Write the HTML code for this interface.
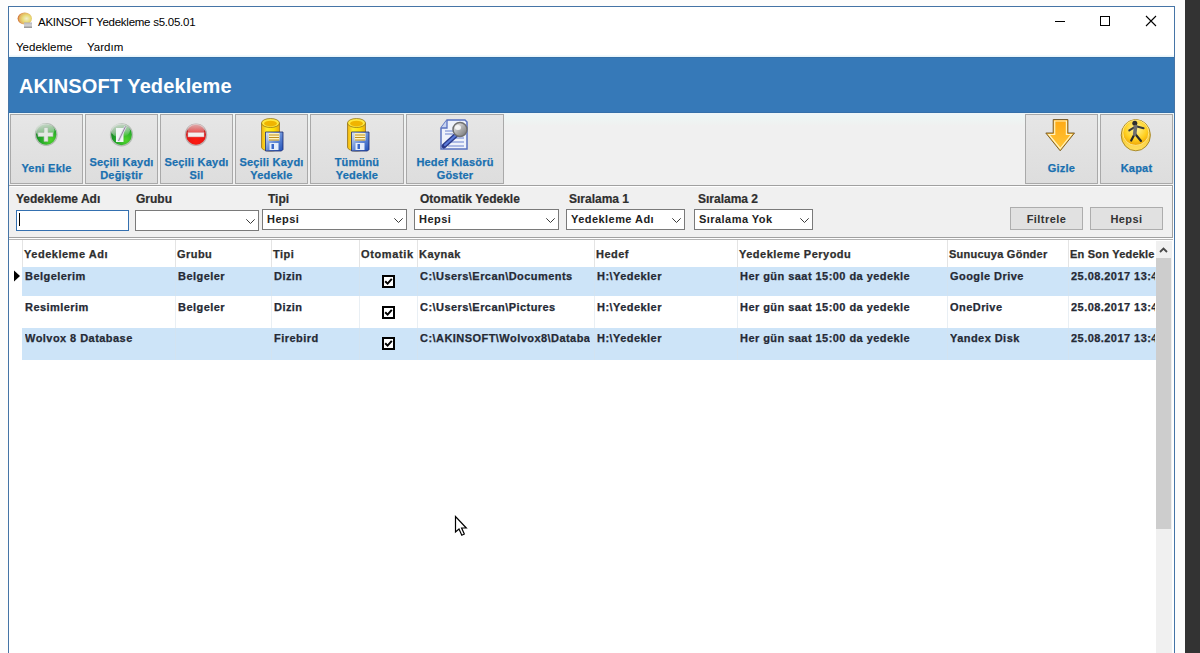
<!DOCTYPE html>
<html><head><meta charset="utf-8">
<style>
*{margin:0;padding:0;box-sizing:border-box}
html,body{width:1200px;height:653px;overflow:hidden;background:#fdfdfd;font-family:"Liberation Sans",sans-serif}
.a{position:absolute}
.t{position:absolute;white-space:nowrap;line-height:1}
#desk{left:1185px;top:0;width:15px;height:653px;background:#333333}
#win{left:8px;top:6px;width:1167px;height:660px;border:1px solid #4574a6;background:#ffffff}
.hdr{left:9px;top:57px;width:1165px;height:56px;background:#3679b8;border-top:1px solid #3570a8;border-bottom:1px solid #3470aa}
.tb{left:9px;top:113px;width:1165px;height:72px;background:linear-gradient(#eef6f8 0px,#eef5f3 6px,#f0f0f0 13px,#f0f0f0)}
.btn{position:absolute;top:114px;height:70px;border:1px solid #a9a9a9;background:linear-gradient(#e6e6e6,#dddddd)}
.bt{position:absolute;left:0;width:100%;text-align:center;font-weight:bold;font-size:11px;color:#1a70b0;line-height:12.8px;letter-spacing:.2px;-webkit-text-stroke:.25px #1a70b0}
.fp{left:9px;top:185px;width:1164px;height:53px;background:#f0f0f0;border-top:1px solid #a0a0a0;border-bottom:1px solid #a0a0a0;border-right:1px solid #a0a0a0}
.lbl{position:absolute;top:193px;font-size:12px;font-weight:bold;color:#2e2e2e;line-height:1;-webkit-text-stroke:.2px #2e2e2e}
.cb{position:absolute;top:210px;height:21px;border:1px solid #7a7a7a;background:#fff}
.cbt{position:absolute;left:4px;top:4px;font-size:11px;letter-spacing:.45px;line-height:11px;font-weight:bold;color:#222;white-space:nowrap}
.chev{position:absolute;right:3px;top:8px;width:9px;height:5px}
.fbtn{position:absolute;top:207px;height:23px;border:1px solid #adadad;background:#e1e1e1;text-align:center;font-size:11px;letter-spacing:.45px;font-weight:bold;color:#333;line-height:23px}
.grid{left:9px;top:238px;width:1164px;height:420px;background:#ffffff}
.gh{position:absolute;top:249px;font-size:11px;letter-spacing:.45px;font-weight:bold;color:#2e2e2e;line-height:1;-webkit-text-stroke:.25px #2e2e2e}
.sep{position:absolute;top:240px;width:1px;height:27px;background:#e4e4e4}
.row{position:absolute;left:22px;width:1134px;height:31px}
.cell{position:absolute;font-size:11px;letter-spacing:.45px;font-weight:bold;color:#252a35;line-height:1;white-space:nowrap;overflow:hidden;-webkit-text-stroke:.25px #252a35}
.vsep{position:absolute;width:1px;background:rgba(215,225,235,.55)}
.chk{position:absolute;left:382px;width:13px;height:13px;border:2px solid #000;background:#fff}
</style></head><body>
<div id="desk" class="a"></div>
<div id="win" class="a"></div>

<!-- title bar -->
<svg class="a" style="left:16px;top:11px" width="18" height="18" viewBox="0 0 18 18">
<defs><radialGradient id="gb" cx="0.62" cy="0.5" r="0.62"><stop offset="0" stop-color="#f0eed0"/><stop offset="0.45" stop-color="#e8dc78"/><stop offset="0.8" stop-color="#e2b060"/><stop offset="1" stop-color="#cc6428"/></radialGradient>
<linearGradient id="gbase" x1="0" y1="0" x2="0" y2="1"><stop offset="0" stop-color="#b0b0b8"/><stop offset="0.5" stop-color="#d4d4d4"/><stop offset="1" stop-color="#909090"/></linearGradient></defs>
<ellipse cx="8.8" cy="7.6" rx="7.2" ry="6" fill="url(#gb)"/>
<path d="M8 11.5h8v5.5h-8z" fill="url(#gbase)"/>

</svg>
<div class="t" style="left:38px;top:17px;font-size:11.5px;letter-spacing:-.25px;color:#000">AKINSOFT Yedekleme s5.05.01</div>
<!-- window controls -->
<div class="a" style="left:1055px;top:21px;width:10px;height:1px;background:#000"></div>
<div class="a" style="left:1100px;top:16px;width:10px;height:10px;border:1px solid #000"></div>
<svg class="a" style="left:1145px;top:15px" width="12" height="12" viewBox="0 0 12 12"><path d="M1 1L11 11M11 1L1 11" stroke="#000" stroke-width="1.1"/></svg>
<!-- menu -->
<div class="t" style="left:16px;top:42px;font-size:11.5px;color:#000">Yedekleme</div>
<div class="t" style="left:87px;top:42px;font-size:11.5px;color:#000">Yardım</div>

<!-- header -->
<div class="a" style="left:9px;top:55px;width:1165px;height:2px;background:linear-gradient(#f6fbfd,#e4f4fb)"></div>
<div class="a hdr"></div>
<div class="t" style="left:19px;top:75.5px;font-size:20px;letter-spacing:.1px;font-weight:bold;color:#fff">AKINSOFT Yedekleme</div>

<!-- toolbar -->
<div class="a tb"></div>
<div class="btn" style="left:10px;width:73px"><div class="bt" style="top:47px">Yeni Ekle</div></div>
<div class="btn" style="left:85px;width:73px"><div class="bt" style="top:41px">Seçili Kaydı<br>Değiştir</div></div>
<div class="btn" style="left:160px;width:73px"><div class="bt" style="top:41px">Seçili Kaydı<br>Sil</div></div>
<div class="btn" style="left:235px;width:73px"><div class="bt" style="top:41px">Seçili Kaydı<br>Yedekle</div></div>
<div class="btn" style="left:310px;width:94px"><div class="bt" style="top:41px">Tümünü<br>Yedekle</div></div>
<div class="btn" style="left:406px;width:98px"><div class="bt" style="top:41px">Hedef Klasörü<br>Göster</div></div>
<div class="btn" style="left:1025px;width:73px"><div class="bt" style="top:47px">Gizle</div></div>
<div class="btn" style="left:1100px;width:73px"><div class="bt" style="top:47px">Kapat</div></div>


<!-- toolbar icons -->
<svg class="a" style="left:34px;top:122px" width="25" height="25" viewBox="0 0 25 25">
<defs>
<radialGradient id="g1" cx="0.7" cy="0.75" r="0.8"><stop offset="0" stop-color="#4fd42a"/><stop offset="0.6" stop-color="#22a52a"/><stop offset="1" stop-color="#137a1e"/></radialGradient>
<linearGradient id="gl" x1="0.2" y1="0" x2="0.5" y2="1"><stop offset="0" stop-color="#e0e4e0" stop-opacity="0.95"/><stop offset="0.55" stop-color="#c8d8c8" stop-opacity="0.7"/><stop offset="1" stop-color="#ffffff" stop-opacity="0"/></linearGradient>
</defs>
<circle cx="12.2" cy="12.5" r="10.8" fill="url(#g1)" stroke="#b4bcb4" stroke-width="1.3"/>
<ellipse cx="11" cy="8.5" rx="9.5" ry="7" fill="url(#gl)"/>
<path d="M10 5.5h4v5h5v4h-5v5h-4v-5h-6v-4h6z" fill="#e4eae4" stroke="#a8b8a8" stroke-width="0.6"/>
</svg>
<svg class="a" style="left:109px;top:122px" width="25" height="25" viewBox="0 0 25 25">
<defs>
<radialGradient id="g2" cx="0.7" cy="0.75" r="0.8"><stop offset="0" stop-color="#4fd42a"/><stop offset="0.6" stop-color="#22a52a"/><stop offset="1" stop-color="#137a1e"/></radialGradient>
</defs>
<circle cx="12.5" cy="12.8" r="11" fill="url(#g2)" stroke="#b4bcb4" stroke-width="1.3"/>
<ellipse cx="11.5" cy="8.5" rx="9.5" ry="7" fill="url(#gl)"/>
<path d="M7 6h7.5v14h-7.5z" fill="#f2f6f6"/>
<path d="M16.5 4.5L9.5 19" stroke="#e0dce8" stroke-width="2.6"/>
<path d="M16.5 4.5L9.5 19" stroke="#8a7a9a" stroke-width="0.9"/>
</svg>
<svg class="a" style="left:184px;top:122px" width="25" height="25" viewBox="0 0 25 25">
<defs>
<radialGradient id="g3" cx="0.5" cy="0.8" r="0.75"><stop offset="0" stop-color="#ff1a10"/><stop offset="0.65" stop-color="#e01515"/><stop offset="1" stop-color="#b01818"/></radialGradient>
<linearGradient id="gl3" x1="0" y1="0" x2="0" y2="1"><stop offset="0" stop-color="#f0d0d0" stop-opacity="0.8"/><stop offset="1" stop-color="#ffffff" stop-opacity="0.05"/></linearGradient>
</defs>
<circle cx="12" cy="12.7" r="10.6" fill="url(#g3)" stroke="#bcb0b0" stroke-width="1.3"/>
<ellipse cx="12" cy="8" rx="8.5" ry="6" fill="url(#gl3)"/>
<rect x="4" y="10.7" width="16" height="4.2" fill="#f4eeee" stroke="#d8b8b8" stroke-width="0.5"/>
</svg>
<svg class="a" style="left:261px;top:118px" width="24" height="34" viewBox="0 0 24 34">
<defs>
<linearGradient id="cy1" x1="0" y1="0" x2="1" y2="0"><stop offset="0" stop-color="#f0b010"/><stop offset="0.3" stop-color="#fff030"/><stop offset="0.7" stop-color="#ffe000"/><stop offset="1" stop-color="#e8a810"/></linearGradient>
<linearGradient id="fl1" x1="0" y1="0" x2="1" y2="1"><stop offset="0" stop-color="#e0e8f4"/><stop offset="0.5" stop-color="#6a90d8"/><stop offset="1" stop-color="#2050b8"/></linearGradient>
</defs>
<path d="M0.5 5v24c0 2.5 4 4 9 4s9-1.5 9-4V5z" fill="url(#cy1)" stroke="#8a6a10" stroke-width="0.7"/>
<ellipse cx="9.5" cy="5" rx="9" ry="4.5" fill="#ffe840" stroke="#8a6a10" stroke-width="0.7"/>
<ellipse cx="9.5" cy="5.6" rx="6.5" ry="2.8" fill="#f0b400"/>
<path d="M4.5 14h17.5v17.5l-1.5 1.5h-16z" fill="url(#fl1)" stroke="#1a2a70" stroke-width="0.8"/>
<rect x="7.5" y="15" width="11" height="7.5" fill="#fff4c0"/>
<path d="M8 17h10M8 19.5h10M8 22h10" stroke="#c09020" stroke-width="1"/>
<rect x="8.5" y="25" width="9" height="7" fill="#e6eefa"/>
<rect x="10.5" y="26" width="2.5" height="5" fill="#3a68c8"/>
</svg>
<svg class="a" style="left:347px;top:118px" width="24" height="34" viewBox="0 0 24 34">
<defs>
<linearGradient id="cy2" x1="0" y1="0" x2="1" y2="0"><stop offset="0" stop-color="#f0b010"/><stop offset="0.3" stop-color="#fff030"/><stop offset="0.7" stop-color="#ffe000"/><stop offset="1" stop-color="#e8a810"/></linearGradient>
<linearGradient id="fl2" x1="0" y1="0" x2="1" y2="1"><stop offset="0" stop-color="#e0e8f4"/><stop offset="0.5" stop-color="#6a90d8"/><stop offset="1" stop-color="#2050b8"/></linearGradient>
</defs>
<path d="M0.5 5v24c0 2.5 4 4 9 4s9-1.5 9-4V5z" fill="url(#cy2)" stroke="#8a6a10" stroke-width="0.7"/>
<ellipse cx="9.5" cy="5" rx="9" ry="4.5" fill="#ffe840" stroke="#8a6a10" stroke-width="0.7"/>
<ellipse cx="9.5" cy="5.6" rx="6.5" ry="2.8" fill="#f0b400"/>
<path d="M4.5 14h17.5v17.5l-1.5 1.5h-16z" fill="url(#fl2)" stroke="#1a2a70" stroke-width="0.8"/>
<rect x="7.5" y="15" width="11" height="7.5" fill="#fff4c0"/>
<path d="M8 17h10M8 19.5h10M8 22h10" stroke="#c09020" stroke-width="1"/>
<rect x="8.5" y="25" width="9" height="7" fill="#e6eefa"/>
<rect x="10.5" y="26" width="2.5" height="5" fill="#3a68c8"/>
</svg>
<svg class="a" style="left:439px;top:118px" width="32" height="34" viewBox="0 0 32 34">
<defs><linearGradient id="lens" x1="0" y1="0" x2="1" y2="1"><stop offset="0" stop-color="#f8f8f8"/><stop offset="0.5" stop-color="#b0b0b0"/><stop offset="1" stop-color="#707070"/></linearGradient></defs>
<path d="M8 2h18l2 2v27h-26v-21z" fill="#eef2fb" stroke="#5a72c0" stroke-width="1.5"/>
<path d="M2 10h6v-8" fill="#c8d4f0" stroke="#5a72c0" stroke-width="1.3"/>
<path d="M6 13h10M6 16h8M11 20h14M10 24h15M9 28h16" stroke="#6a82d0" stroke-width="1.2"/>
<path d="M17 17L5 28" stroke="#2a3a8a" stroke-width="5" stroke-linecap="round"/>
<path d="M16.5 17.5L6 27" stroke="#5a7ad8" stroke-width="2.2" stroke-linecap="round"/>
<circle cx="21" cy="11.5" r="7" fill="url(#lens)" stroke="#707070" stroke-width="1.5"/>
<ellipse cx="19" cy="9.5" rx="3" ry="2.5" fill="#ffffff" opacity="0.8"/>
</svg>
<svg class="a" style="left:1045px;top:118px" width="30" height="34" viewBox="0 0 30 34">
<defs><linearGradient id="arr" x1="0" y1="0" x2="0" y2="1"><stop offset="0" stop-color="#ffa812"/><stop offset="1" stop-color="#ffc83a"/></linearGradient></defs>
<path d="M8.2 1.5h14.7v13.5h6.6L15.2 32.8L0.8 15h7.4z" fill="url(#arr)" stroke="#7a6030" stroke-width="1"/>
<path d="M9.7 3h11.7v13.5h5L15.2 30.5L3.8 16.5h5.9z" fill="none" stroke="#fff3c0" stroke-width="1.2"/>
</svg>
<svg class="a" style="left:1120px;top:118px" width="32" height="34" viewBox="0 0 32 34">
<defs>
<radialGradient id="coin" cx="0.5" cy="0.35" r="0.7"><stop offset="0" stop-color="#fff6a0"/><stop offset="0.6" stop-color="#ffd020"/><stop offset="1" stop-color="#e89a00"/></radialGradient>
<linearGradient id="rim" x1="0" y1="0" x2="0" y2="1"><stop offset="0" stop-color="#f0b000"/><stop offset="1" stop-color="#ffe060"/></linearGradient>
</defs>
<ellipse cx="15.8" cy="17.2" rx="14.6" ry="15.6" fill="url(#rim)" stroke="#a08020" stroke-width="0.9"/>
<ellipse cx="15.8" cy="14.8" rx="13" ry="12.6" fill="url(#coin)" stroke="#fff0a0" stroke-width="0.8"/>
<circle cx="14.8" cy="5.2" r="2.5" fill="#2e2e2e"/>
<path d="M16 8.3L23.6 10.3M14.6 9.2L9.3 12.4" stroke="#3a3a3a" stroke-width="2" fill="none" stroke-linecap="round"/>
<path d="M14.6 16L11.2 22.6M15.2 16L21 23" stroke="#2a2a2a" stroke-width="2.2" fill="none" stroke-linecap="round"/>
<path d="M15.6 8.5L14.7 16.2" stroke="#6e6e6e" stroke-width="3.6" stroke-linecap="round"/>
</svg>

<!-- filter panel -->
<div class="a fp"></div>
<div class="lbl" style="left:16px">Yedekleme Adı</div>
<div class="lbl" style="left:136px">Grubu</div>
<div class="lbl" style="left:268px">Tipi</div>
<div class="lbl" style="left:420px">Otomatik Yedekle</div>
<div class="lbl" style="left:569px">Sıralama 1</div>
<div class="lbl" style="left:698px">Sıralama 2</div>
<div class="cb" style="left:16px;width:113px;border-color:#3470b0"><div class="a" style="left:2px;top:2px;width:1px;height:13px;background:#000"></div></div>
<div class="cb" style="left:135px;width:124px"><svg class="chev" viewBox="0 0 9 5"><path d="M0.3 0.3L4.5 4.5L8.7 0.3" stroke="#3a3a3a" stroke-width="1" fill="none"/></svg></div>
<div class="cb" style="top:209px;left:262px;width:145px"><svg class="chev" viewBox="0 0 9 5"><path d="M0.3 0.3L4.5 4.5L8.7 0.3" stroke="#3a3a3a" stroke-width="1" fill="none"/></svg><div class="cbt">Hepsi</div></div>
<div class="cb" style="top:209px;left:414px;width:145px"><svg class="chev" viewBox="0 0 9 5"><path d="M0.3 0.3L4.5 4.5L8.7 0.3" stroke="#3a3a3a" stroke-width="1" fill="none"/></svg><div class="cbt">Hepsi</div></div>
<div class="cb" style="top:209px;left:566px;width:119px"><svg class="chev" viewBox="0 0 9 5"><path d="M0.3 0.3L4.5 4.5L8.7 0.3" stroke="#3a3a3a" stroke-width="1" fill="none"/></svg><div class="cbt">Yedekleme Adı</div></div>
<div class="cb" style="top:209px;left:694px;width:119px"><svg class="chev" viewBox="0 0 9 5"><path d="M0.3 0.3L4.5 4.5L8.7 0.3" stroke="#3a3a3a" stroke-width="1" fill="none"/></svg><div class="cbt">Sıralama Yok</div></div>
<div class="fbtn" style="left:1010px;width:73px">Filtrele</div>
<div class="fbtn" style="left:1090px;width:73px">Hepsi</div>

<!-- grid -->
<div class="a grid"></div>

<!-- grid header -->
<div class="a" style="left:9px;top:238px;width:1164px;height:1px;background:#ffffff"></div>
<div class="a" style="left:9px;top:239px;width:1164px;height:1px;background:#b4b4b4"></div>
<div class="a" style="left:10px;top:186px;width:1162px;height:1px;background:#ffffff"></div>
<div class="sep" style="left:22px"></div>
<div class="sep" style="left:175px"></div>
<div class="sep" style="left:271px"></div>
<div class="sep" style="left:359px"></div>
<div class="sep" style="left:417px"></div>
<div class="sep" style="left:594px"></div>
<div class="sep" style="left:737px"></div>
<div class="sep" style="left:947px"></div>
<div class="sep" style="left:1068px"></div>
<div class="gh" style="left:24px;letter-spacing:.52px">Yedekleme Adı</div>
<div class="gh" style="left:177px">Grubu</div>
<div class="gh" style="left:273px">Tipi</div>
<div class="gh" style="left:361px;letter-spacing:.64px">Otomatik</div>
<div class="gh" style="left:419px">Kaynak</div>
<div class="gh" style="left:596px">Hedef</div>
<div class="gh" style="left:739px;letter-spacing:.49px">Yedekleme Peryodu</div>
<div class="gh" style="left:949px;letter-spacing:.25px">Sunucuya Gönder</div>
<div class="gh" style="left:1070px;letter-spacing:.21px">En Son Yedekle</div>

<!-- rows -->
<div class="row" style="top:267px;height:29px;background:#cde4f8"></div>
<div class="row" style="top:328px;height:32px;background:#cde4f8"></div>
<div class="vsep" style="left:175px;top:267px;height:93px"></div>
<div class="vsep" style="left:271px;top:267px;height:93px"></div>
<div class="vsep" style="left:359px;top:267px;height:93px"></div>
<div class="vsep" style="left:417px;top:267px;height:93px"></div>
<div class="vsep" style="left:594px;top:267px;height:93px"></div>
<div class="vsep" style="left:737px;top:267px;height:93px"></div>
<div class="vsep" style="left:947px;top:267px;height:93px"></div>
<div class="vsep" style="left:1068px;top:267px;height:93px"></div>
<svg class="a" style="left:14px;top:270px" width="7" height="12" viewBox="0 0 7 12"><path d="M0 0.5L6 6L0 11.5Z" fill="#000"/></svg>

<div class="cell" style="left:25px;top:271px">Belgelerim</div>
<div class="cell" style="left:178px;top:271px">Belgeler</div>
<div class="cell" style="left:274px;top:271px">Dizin</div>
<div class="chk" style="top:275px"><svg width="9" height="9" viewBox="0 0 9 9" style="position:absolute;left:0;top:0"><path d="M1.2 4.2L3.6 6.6L7.8 1.8" stroke="#000" stroke-width="2" fill="none"/></svg></div>
<div class="cell" style="left:420px;top:271px;width:173px">C:\Users\Ercan\Documents</div>
<div class="cell" style="left:597px;top:271px">H:\Yedekler</div>
<div class="cell" style="left:740px;top:271px">Her gün saat 15:00 da yedekle</div>
<div class="cell" style="left:950px;top:271px">Google Drive</div>
<div class="cell" style="left:1071px;top:271px;width:84px">25.08.2017 13:45</div>

<div class="cell" style="left:25px;top:302px">Resimlerim</div>
<div class="cell" style="left:178px;top:302px">Belgeler</div>
<div class="cell" style="left:274px;top:302px">Dizin</div>
<div class="chk" style="top:306px"><svg width="9" height="9" viewBox="0 0 9 9" style="position:absolute;left:0;top:0"><path d="M1.2 4.2L3.6 6.6L7.8 1.8" stroke="#000" stroke-width="2" fill="none"/></svg></div>
<div class="cell" style="left:420px;top:302px;width:173px">C:\Users\Ercan\Pictures</div>
<div class="cell" style="left:597px;top:302px">H:\Yedekler</div>
<div class="cell" style="left:740px;top:302px">Her gün saat 15:00 da yedekle</div>
<div class="cell" style="left:950px;top:302px">OneDrive</div>
<div class="cell" style="left:1071px;top:302px;width:84px">25.08.2017 13:45</div>

<div class="cell" style="left:25px;top:333px">Wolvox 8 Database</div>
<div class="cell" style="left:274px;top:333px">Firebird</div>
<div class="chk" style="top:337px"><svg width="9" height="9" viewBox="0 0 9 9" style="position:absolute;left:0;top:0"><path d="M1.2 4.2L3.6 6.6L7.8 1.8" stroke="#000" stroke-width="2" fill="none"/></svg></div>
<div class="cell" style="left:420px;top:333px;width:170px">C:\AKINSOFT\Wolvox8\Database</div>
<div class="cell" style="left:597px;top:333px">H:\Yedekler</div>
<div class="cell" style="left:740px;top:333px">Her gün saat 15:00 da yedekle</div>
<div class="cell" style="left:950px;top:333px">Yandex Disk</div>
<div class="cell" style="left:1071px;top:333px;width:84px">25.08.2017 13:45</div>

<!-- scrollbar -->
<div class="a" style="left:1156px;top:241px;width:16px;height:420px;background:#f0f0f0"></div>
<div class="a" style="left:1156px;top:258px;width:15px;height:271px;background:#cdcdcd"></div>
<svg class="a" style="left:1159px;top:246px" width="9" height="8" viewBox="0 0 9 8"><path d="M1 6L4.5 2.5L8 6" stroke="#484848" stroke-width="1.8" fill="none"/></svg>

<!-- cursor -->
<svg class="a" style="left:454px;top:515px" width="14" height="22" viewBox="0 0 14 22"><path d="M1.5 1.5L1.5 17L5 14L7.8 20.2L10.3 19L7.6 13L12.3 13Z" fill="#fff" stroke="#000" stroke-width="1.2" stroke-linejoin="miter"/></svg>
</body></html>
